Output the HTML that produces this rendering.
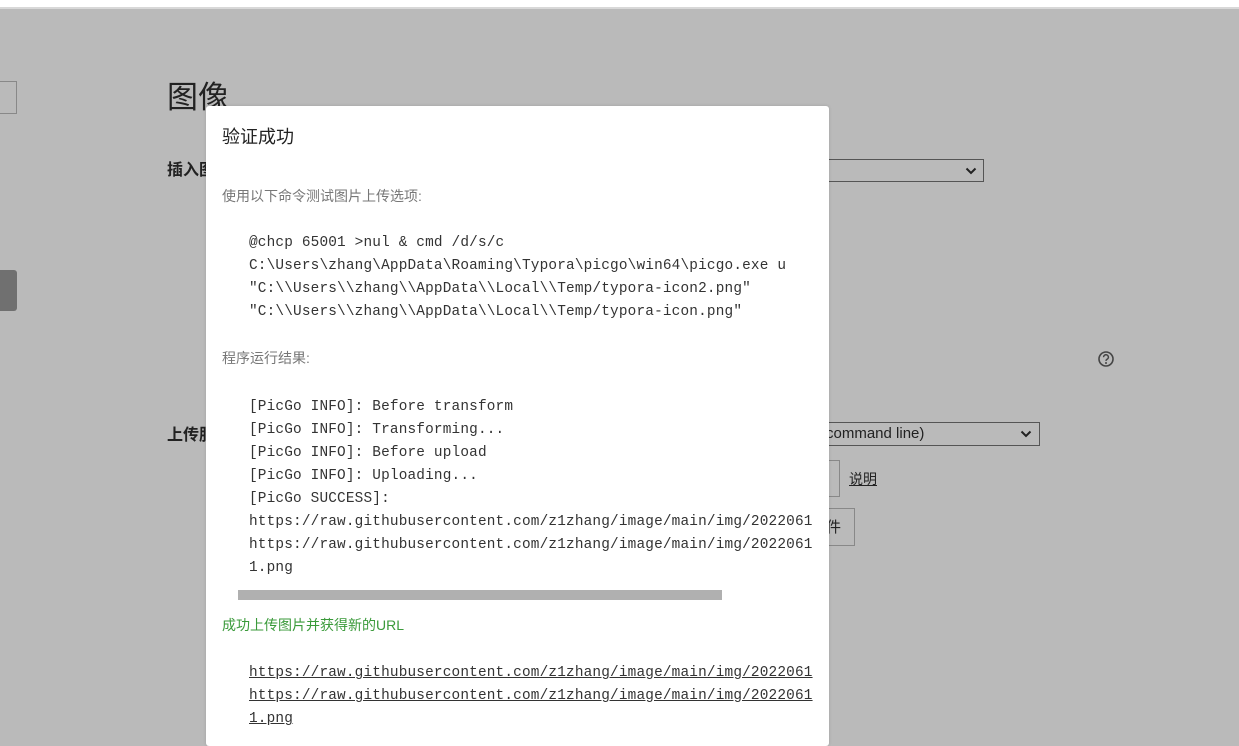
<!DOCTYPE html>
<html><head><meta charset="utf-8"><style>
*{margin:0;padding:0;box-sizing:border-box}
body{width:1239px;height:729px;overflow:hidden;background:#bababa;position:relative;font-family:"Liberation Sans","Noto Sans CJK SC",sans-serif;color:#222}
.a{position:absolute;white-space:nowrap}
.m{font-family:"Liberation Mono","DejaVu Sans Mono",monospace;font-size:14.4px;letter-spacing:0.17px;line-height:23px;color:#333;left:249px}
.g{font-size:14px;color:#777;left:222px;line-height:20px}
.u{text-decoration:underline}
</style></head><body>
<div class="a" style="left:0;top:0;width:1239px;height:7px;background:#fff"></div>
<div class="a" style="left:0;top:7px;width:1239px;height:2px;background:#d8d8d8"></div>
<div class="a" style="left:-2px;top:81px;width:19px;height:33px;border:1px solid #888"></div>
<div class="a" style="left:-4px;top:270px;width:21px;height:41px;background:#707070;border-radius:3px"></div>
<div class="a" style="left:167px;top:80px;font-size:31px;line-height:36px;color:#222">图像</div>
<div class="a" style="left:167px;top:161px;font-size:16px;font-weight:bold;line-height:20px">插入图</div>
<div class="a" style="left:167px;top:426px;font-size:16px;font-weight:bold;line-height:20px">上传服</div>
<div class="a" style="left:800px;top:159px;width:184px;height:23px;border:1px solid #555"></div>
<svg class="a" style="left:965px;top:166px" width="12" height="10"><path d="M1.5 2.5L6 7L10.5 2.5" stroke="#222" stroke-width="2" fill="none"/></svg>
<svg class="a" style="left:1097px;top:350px" width="18" height="18"><circle cx="9" cy="9" r="7" stroke="#444" stroke-width="1.6" fill="none"/><path d="M6.6 7.2a2.4 2.4 0 1 1 3.4 2.1c-.7.4-1 .8-1 1.6" stroke="#444" stroke-width="1.5" fill="none"/><circle cx="9" cy="13" r="1" fill="#444"/></svg>
<div class="a" style="left:800px;top:422px;width:240px;height:24px;border:1px solid #555"></div>
<div class="a" style="left:826px;top:424px;font-size:15px;line-height:20px;color:#222">command line)</div>
<svg class="a" style="left:1020px;top:429px" width="12" height="10"><path d="M1.5 2.5L6 7L10.5 2.5" stroke="#222" stroke-width="2" fill="none"/></svg>
<div class="a" style="left:800px;top:460px;width:40px;height:37px;border:1px solid #888"></div>
<div class="a u" style="left:849px;top:469px;font-size:14px;line-height:20px;color:#222">说明</div>
<div class="a" style="left:800px;top:508px;width:55px;height:38px;border:1px solid #888"></div>
<div class="a" style="left:826px;top:518px;font-size:15px;line-height:20px">件</div>

<div class="a" style="left:206px;top:106px;width:623px;height:640px;background:#fff;border-radius:3px;box-shadow:0 0 3px rgba(0,0,0,.15)"></div>
<div class="a" style="left:222px;top:126px;font-size:18px;line-height:22px;color:#222">验证成功</div>
<div class="a g" style="top:186px">使用以下命令测试图片上传选项:</div>
<div class="a m" style="top:232px">@chcp 65001 &gt;nul &amp; cmd /d/s/c</div>
<div class="a m" style="top:255px">C:\Users\zhang\AppData\Roaming\Typora\picgo\win64\picgo.exe u</div>
<div class="a m" style="top:278px">"C:\\Users\\zhang\\AppData\\Local\\Temp/typora-icon2.png"</div>
<div class="a m" style="top:301px">"C:\\Users\\zhang\\AppData\\Local\\Temp/typora-icon.png"</div>
<div class="a g" style="top:348px">程序运行结果:</div>
<div class="a m" style="top:396px">[PicGo INFO]: Before transform</div>
<div class="a m" style="top:419px">[PicGo INFO]: Transforming...</div>
<div class="a m" style="top:442px">[PicGo INFO]: Before upload</div>
<div class="a m" style="top:465px">[PicGo INFO]: Uploading...</div>
<div class="a m" style="top:488px">[PicGo SUCCESS]:</div>
<div class="a m" style="top:511px">https://raw.githubusercontent.com/z1zhang/image/main/img/2022061</div>
<div class="a m" style="top:534px">https://raw.githubusercontent.com/z1zhang/image/main/img/2022061</div>
<div class="a m" style="top:557px">1.png</div>
<div class="a" style="left:238px;top:590px;width:484px;height:10px;background:#b0b0b0"></div>
<div class="a" style="left:222px;top:615px;font-size:14px;line-height:20px;color:#3a9a3a">成功上传图片并获得新的URL</div>
<div class="a m u" style="top:662px">https://raw.githubusercontent.com/z1zhang/image/main/img/2022061</div>
<div class="a m u" style="top:685px">https://raw.githubusercontent.com/z1zhang/image/main/img/2022061</div>
<div class="a m u" style="top:708px">1.png</div>
</body></html>
